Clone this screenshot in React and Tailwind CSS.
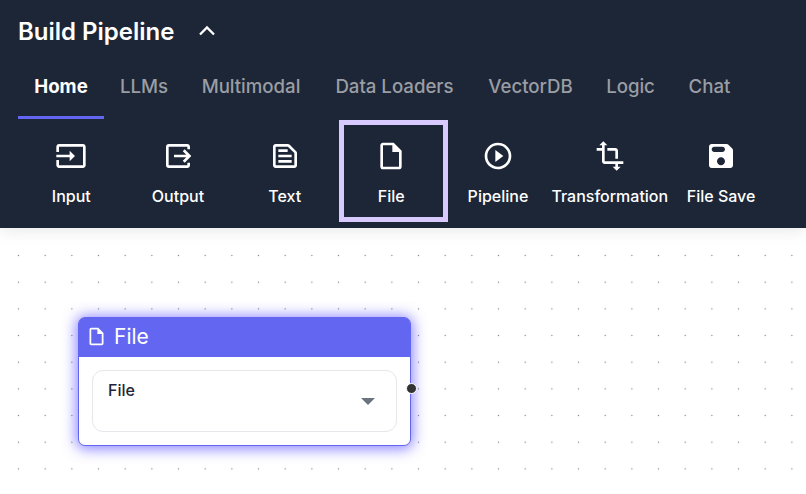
import React from "react";

const ICONS = {
  input:
    "M21 3.01H3c-1.1 0-2 .9-2 2V9h2V4.99h18v14.03H3V15H1v4.01c0 1.1.9 1.98 2 1.98h18c1.1 0 2-.88 2-1.98v-14c0-1.11-.9-2-2-2zM11 16l4-4-4-4v3H1v2h10v3z",
  output:
    "M17 17l5-5-5-5-1.41 1.41L18.17 11H9v2h9.17l-2.58 2.59L17 17zM19 19H5V5h14v2h2V5c0-1.1-.9-2-2-2H5c-1.1 0-2 .9-2 2v14c0 1.1.9 2 2 2h14c1.1 0 2-.9 2-2v-2h-2v2z",
  text: "M7 15h10v2H7zm0-4h10v2H7zm0-4h7v2H7zM14.17 5L19 9.83V19H5V5h9.17m0-2H5c-1.1 0-2 .9-2 2v14c0 1.1.9 2 2 2h14c1.1 0 2-.9 2-2V9.83c0-.53-.21-1.04-.59-1.41l-4.83-4.83c-.37-.38-.88-.59-1.41-.59z",
  file: "M14 2H6c-1.1 0-1.99.9-1.99 2L4 20c0 1.1.89 2 1.99 2H18c1.1 0 2-.9 2-2V8l-6-6zM6 20V4h7v5h5v11H6z",
  pipeline:
    "M10 16.5l6-4.5-6-4.5v9zM12 2C6.48 2 2 6.48 2 12s4.48 10 10 10 10-4.48 10-10S17.52 2 12 2zm0 18c-4.41 0-8-3.59-8-8s3.59-8 8-8 8 3.59 8 8-3.59 8-8 8z",
  transform:
    "M22 18v-2H8V4h2L7 1 4 4h2v2H2v2h4v8c0 1.1.9 2 2 2h8v2h-2l3 3 3-3h-2v-2h4zM10 8h6v6h2V8c0-1.1-.9-2-2-2h-6v2z",
  save: "M17.59 3.59c-.38-.38-.89-.59-1.42-.59H5c-1.11 0-2 .9-2 2v14c0 1.1.9 2 2 2h14c1.1 0 2-.9 2-2V7.83c0-.53-.21-1.04-.59-1.41l-2.82-2.83zM12 19c-1.66 0-3-1.34-3-3s1.34-3 3-3 3 1.34 3 3-1.34 3-3 3zm1-10H7c-1.1 0-2-.9-2-2s.9-2 2-2h6c1.1 0 2 .9 2 2s-.9 2-2 2z",
};

function Icon({ name, className }) {
  return (
    <svg viewBox="0 0 24 24" fill="currentColor" className={className}>
      <path d={ICONS[name]} />
    </svg>
  );
}

const TABS = [
  { label: "Home", width: "w-[86px]", active: true },
  { label: "LLMs", width: "w-[80px]" },
  { label: "Multimodal", width: "w-[134px]" },
  { label: "Data Loaders", width: "w-[153px]" },
  { label: "VectorDB", width: "w-[119px]" },
  { label: "Logic", width: "w-[81px]" },
  { label: "Chat", width: "w-[77px]" },
];

const TOOLS = [
  { label: "Input", icon: "input", width: "w-[106.67px]" },
  { label: "Output", icon: "output", width: "w-[106.67px]" },
  { label: "Text", icon: "text", width: "w-[106.67px]" },
  { label: "File", icon: "file", width: "w-[106.67px]", highlighted: true },
  { label: "Pipeline", icon: "pipeline", width: "w-[106.67px]" },
  { label: "Transformation", icon: "transform", width: "w-[117px]" },
  { label: "File Save", icon: "save", width: "w-[105.5px]" },
];

function Header() {
  return (
    <header className="relative h-[228px] shrink-0 bg-[#1d2636] pl-[18px] text-white shadow-[0_2px_16px_rgba(0,0,0,0.1)]">
      <div className="flex h-[62px] items-center">
        <h1 className="w-[180px] pt-px text-[24px] font-semibold whitespace-nowrap">Build Pipeline</h1>
        <svg viewBox="0 0 18 12" className="h-3 w-[18px]" fill="none" stroke="currentColor" strokeWidth="2.3">
          <path d="M2 9.5 9 2.5l7 7" />
        </svg>
      </div>
      <nav className="flex h-[57px]">
        {TABS.map((t) => (
          <button
            key={t.label}
            className={`flex h-full shrink-0 justify-center border-b-[3px] pt-[11px] text-[18.67px] leading-7 whitespace-nowrap ${t.width} ${
              t.active
                ? "border-[#6366f1] font-bold text-white"
                : "border-transparent font-medium tracking-[-0.02px] text-[#9a9da4]"
            }`}
          >
            {t.label}
          </button>
        ))}
      </nav>
      <div className="flex">
        {TOOLS.map((t) => (
          <button
            key={t.label}
            className={`relative flex shrink-0 flex-col items-center pt-[21px] ${t.width}`}
          >
            <Icon name={t.icon} className="size-8" />
            <span className="mt-3 text-[16px] leading-6 font-medium whitespace-nowrap">{t.label}</span>
            {t.highlighted && (
              <span className="absolute top-[0.5px] left-[0.6px] h-[102px] w-[109px] border-[5px] border-[#d8caff]" />
            )}
          </button>
        ))}
      </div>
    </header>
  );
}

function FileNode() {
  return (
    <section className="absolute top-[88.5px] left-[78px] h-[129.5px] w-[333px] rounded-[7px] border-[1.33px] border-[#6366f1] bg-white shadow-[0_1px_14px_2px_rgba(90,80,255,0.7)]">
      <div className="flex h-[39.5px] items-center gap-[7px] rounded-t-[5px] bg-[#6366f1] pl-[7px] text-white">
        <Icon name="file" className="-mt-px size-[21px]" />
        <span className="text-[21px] leading-8 font-normal">File</span>
      </div>
      <div className="px-[13px] pt-[13px]">
        <div className="flex h-[62px] justify-between rounded-[11px] border border-[#e5e7eb] pt-[7px] pr-[21px] pl-[15px]">
          <span className="text-[16px] leading-6 font-medium text-[#1e2636]">File</span>
          <svg viewBox="0 0 14 7" className="mt-5 h-[7px] w-[14px]" fill="#6b7280">
            <path d="M0 0h14L7 7z" />
          </svg>
        </div>
      </div>
      <span className="absolute top-[65px] right-[-7px] size-[11px] rounded-full border border-white bg-[#333]" />
    </section>
  );
}

export default function App() {
  return (
    <div className="flex h-[494px] w-[806px] flex-col overflow-hidden bg-white font-['Inter',sans-serif]">
      <Header />
      <main className="relative flex-1 pt-3">
        <svg className="h-full w-full" aria-hidden="true">
          <defs>
            <pattern id="dots" x="5.2" y="2.2" width="26.667" height="26.667" patternUnits="userSpaceOnUse">
              <circle cx="13.33" cy="13.33" r="0.67" fill="#81818a" />
            </pattern>
          </defs>
          <rect width="100%" height="100%" fill="url(#dots)" />
        </svg>
        <FileNode />
      </main>
    </div>
  );
}
